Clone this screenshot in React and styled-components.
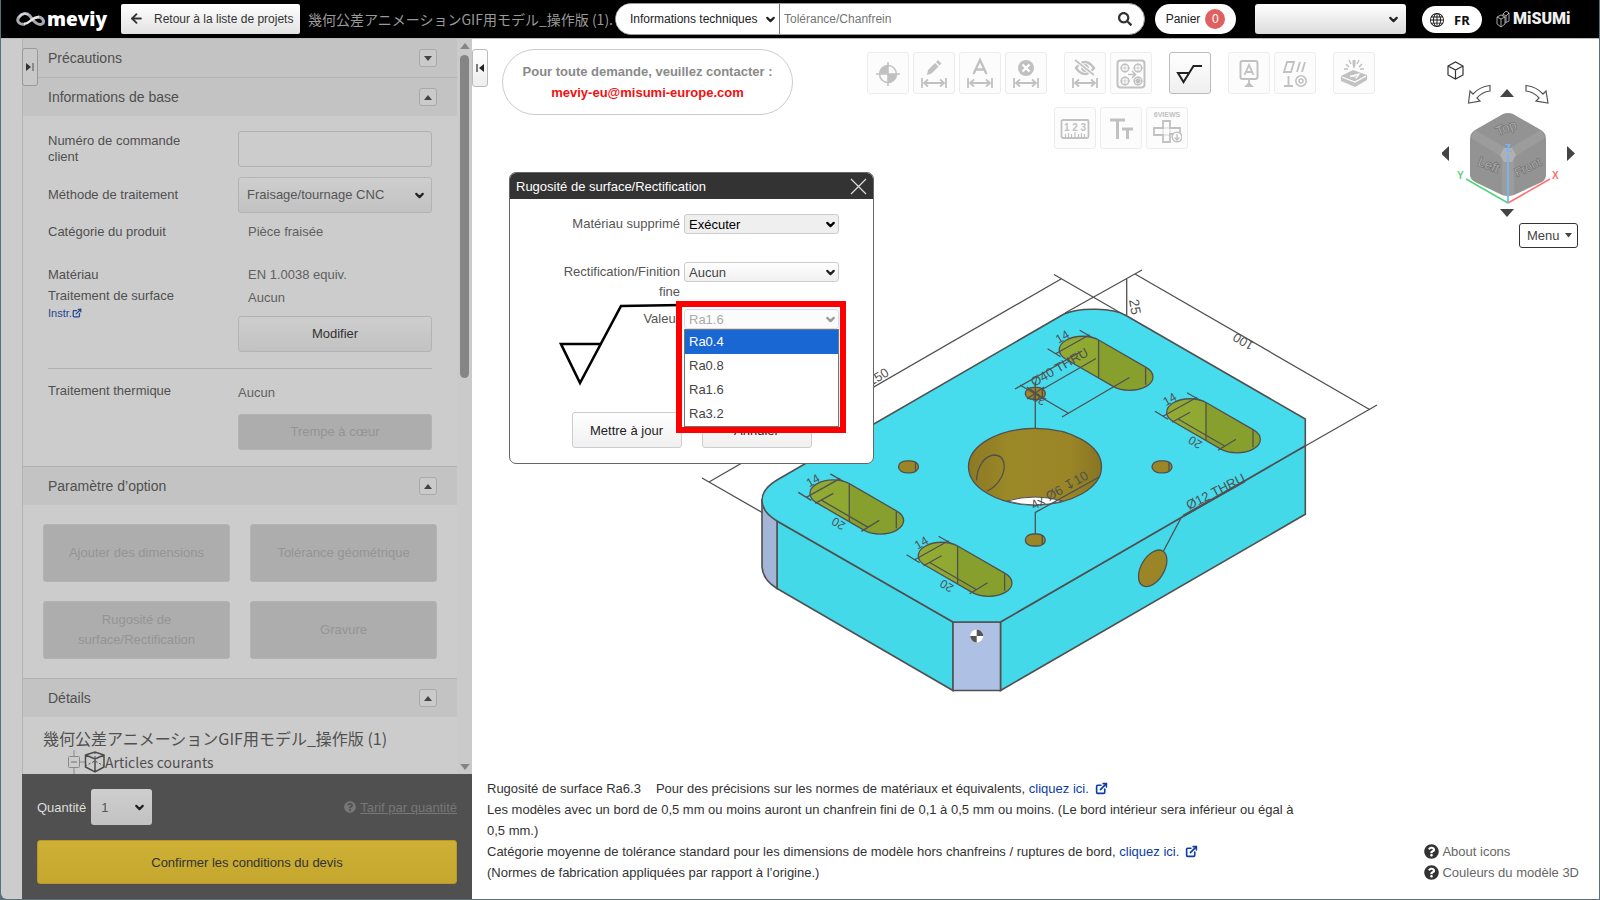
import React, { useState } from 'react'
import styled, { createGlobalStyle } from 'styled-components'
import { ArrowLeft, ChevronDown } from 'lucide-react'
import { FaSearch, FaQuestionCircle } from 'react-icons/fa'
import { FiExternalLink } from 'react-icons/fi'
import { BsGlobe } from 'react-icons/bs'


const GlobalStyle = createGlobalStyle`
    * {
        box-sizing: border-box;
    }
    body {
        margin: 0;
        background: #57717d;
        font-family: 'Liberation Sans', 'Noto Sans CJK JP', Arial, sans-serif;
        font-size: 13px;
        color: #333;
    }
    button, input, select {
        font: inherit;
        margin: 0;
    }
    p, h1, h2 {
        margin: 0;
    }
    h1, h2 {
        font-weight: 400;
    }
    svg {
        display: block;
        flex-shrink: 0;
    }
`

const StyledApp = styled.div`
    height: 100vh;
    padding: 0 1px 1px;
    display: flex;
    flex-direction: column;
`

/* ---------- header ---------- */

const StyledHeader = styled.header`
    height: 39px;
    flex-shrink: 0;
    display: flex;
    align-items: center;
    padding: 0 28px 1px 15px;
    background: #000;
    border-bottom: 1px solid #bbb;
    font-size: 12px;
`

const Brand = styled.a`
    display: flex;
    align-items: center;
    gap: 2px;
    width: 105px;
    flex-shrink: 0;
    color: #fff;
    font-family: 'Open Sans', sans-serif;
    font-size: 19px;
    font-weight: 800;
    line-height: 30px;
    text-decoration: none;
`

const BackButton = styled.button`
    height: 30px;
    width: 179px;
    flex-shrink: 0;
    display: flex;
    align-items: center;
    gap: 10px;
    padding: 0 8px;
    border: 0;
    border-radius: 2px;
    background: linear-gradient(#fff, #e2e2e2);
    color: #333;
    white-space: nowrap;
`

const ProjectName = styled.h1`
    width: 315px;
    flex-shrink: 0;
    padding-left: 8px;
    overflow: hidden;
    white-space: nowrap;
    color: #999;
    font-family: 'Noto Sans CJK JP', sans-serif;
    font-size: 14px;
    line-height: 30px;
`

const SearchBar = styled.form`
    height: 32px;
    flex: 1;
    min-width: 0;
    display: flex;
    align-items: center;
    padding-right: 12px;
    border: 1px solid #999;
    border-radius: 16px;
    background: #fff;
    overflow: hidden;
    input {
        flex: 1;
        min-width: 0;
        height: 100%;
        padding: 0 4px;
        border: 0;
        border-left: 1px solid #777;
        outline: 0;
        color: #333;
    }
    input::placeholder {
        color: #757575;
    }
    button {
        padding: 0;
        border: 0;
        background: none;
        color: #333;
    }
`

const SelectBox = styled.span`
    position: relative;
    display: block;
    flex-shrink: 0;
    width: ${props => props.$width || '100%'};
    select {
        display: block;
        width: 100%;
        height: ${props => props.$height || 36}px;
        padding: 0 ${props => props.$pad || 8}px;
        appearance: none;
        border: ${props => props.$border || '1px solid #b3b3b3'};
        border-radius: 3px;
        background: ${props => props.$bg || 'linear-gradient(#cecece, #c2c2c2)'};
        color: ${props => props.$color || '#555'};
        opacity: 1;
    }
    svg {
        position: absolute;
        right: ${props => props.$arrow || 6}px;
        top: 50%;
        margin-top: -6px;
        color: ${props => props.$arrowColor || '#222'};
        pointer-events: none;
    }
`

const CartButton = styled.button`
    height: 30px;
    width: 81px;
    flex-shrink: 0;
    margin-left: 10px;
    margin-right: 19px;
    display: flex;
    align-items: center;
    justify-content: center;
    gap: 5px;
    padding: 0;
    border: 0;
    border-radius: 15px;
    background: #fff;
    color: #222;
    span {
        width: 20px;
        border-radius: 50%;
        background: #e0605f;
        color: #fff;
        line-height: 20px;
    }
`

const LangButton = styled.button`
    height: 27px;
    width: 60px;
    flex-shrink: 0;
    margin: 2px 14px 0 16px;
    display: flex;
    align-items: center;
    gap: 10px;
    padding: 0 8px;
    border: 0;
    border-radius: 14px;
    background: #fff;
    color: #111;
    font-family: 'Noto Sans', sans-serif;
    font-size: 13px;
    font-weight: 700;
`

const Misumi = styled.a`
    display: flex;
    align-items: center;
    gap: 3px;
    width: 75px;
    flex-shrink: 0;
    color: #f0f0f0;
    font-family: Roboto, sans-serif;
    font-size: 16px;
    font-weight: 900;
    line-height: 30px;
    text-decoration: none;
`

/* ---------- sidebar ---------- */

const Main = styled.div`
    flex: 1;
    min-height: 0;
    display: flex;
`

const Sidebar = styled.aside`
    position: relative;
    width: 471px;
    flex-shrink: 0;
    display: flex;
    flex-direction: column;
    padding-left: 21px;
    border-bottom-left-radius: 6px;
    background: #ccc;
    color: #505050;
`

const EdgeTab = styled.button`
    position: absolute;
    left: ${props => (props.$dim ? 21 : 0)}px;
    top: ${props => (props.$dim ? 9 : 10)}px;
    width: 16px;
    height: 38px;
    display: flex;
    align-items: center;
    justify-content: center;
    padding: 0;
    border: 1px solid ${props => (props.$dim ? '#999' : '#bbb')};
    border-radius: 3px;
    background: ${props => (props.$dim ? '#c8c8c8' : 'linear-gradient(#fff, #eee)')};
`

const ScrollRow = styled.div`
    flex: 1;
    min-height: 0;
    display: flex;
`

const Panels = styled.div`
    flex: 1;
    overflow: hidden;
    border-left: 1px solid #b3b3b3;
`

const ScrollBar = styled.div`
    width: 15px;
    display: flex;
    flex-direction: column;
    align-items: center;
    padding: 4px 0;
    background: #cacaca;
    div {
        width: 9px;
        height: 323px;
        margin: 6px 0 auto;
        border-radius: 5px;
        background: #858585;
    }
`

const SectionHead = styled.h2`
    display: flex;
    align-items: center;
    justify-content: space-between;
    height: ${props => (props.$first ? 38 : 39)}px;
    padding: 0 20px 0 25px;
    border-top: ${props => (props.$first ? '0' : '1px solid #b1b1b1')};
    background: #c3c3c3;
    font-size: 14px;
    button {
        width: 18px;
        height: 18px;
        display: flex;
        align-items: center;
        justify-content: center;
        padding: 0;
        border: 1px solid #a9a9a9;
        border-radius: 3px;
        background: #cacaca;
    }
`

const InfoBody = styled.div`
    padding: 15px 25px 16px;
    hr {
        height: 1px;
        margin: 16px 0 13px;
        border: 0;
        background: #b0b0b0;
    }
`

const Field = styled.div`
    display: grid;
    grid-template-columns: 190px 1fr;
    align-items: ${props => (props.$top ? 'start' : 'center')};
    margin-bottom: ${props => props.$gap || 0}px;
    line-height: 18px;
    label {
        max-width: 150px;
        line-height: 16px;
    }
    input {
        width: 100%;
        height: 36px;
        padding: 0 8px;
        border: 1px solid #b0b0b0;
        border-radius: 3px;
        background: #ccc;
    }
`

const Value = styled.div`
    padding-left: ${props => (props.$flush ? 0 : 10)}px;
    line-height: ${props => (props.$tall ? 22 : 18)}px;
    margin-bottom: ${props => props.$gap || 0}px;
    color: #606060;
`

const InstrLink = styled.a`
    display: flex;
    align-items: center;
    color: #25478f;
    font-size: 11px;
    line-height: 16px;
    text-decoration: none;
`

const PanelButton = styled.button`
    width: 100%;
    height: 36px;
    border: 1px solid #b3b3b3;
    border-radius: 3px;
    background: linear-gradient(#cecece, #c2c2c2);
    color: #333;
    &:disabled {
        background: #adadad;
        color: #949494;
    }
`

const OptionGrid = styled.div`
    display: grid;
    grid-template-columns: 1fr 1fr;
    gap: 19px 20px;
    padding: 19px 20px;
    button {
        height: 58px;
        padding: 0 20px;
        line-height: 20px;
    }
`

const Tree = styled.div`
    padding: 9px 0 0 20px;
    font-family: 'Noto Sans CJK JP', sans-serif;
    p {
        font-size: 16px;
        line-height: 24px;
    }
    div {
        display: flex;
        align-items: center;
        padding-left: 24px;
        font-size: 14px;
        line-height: 24px;
    }
`

const OrderBar = styled.footer`
    flex-shrink: 0;
    padding: 15px 15px;
    background: #505050;
`

const OrderRow = styled.div`
    display: flex;
    align-items: center;
    gap: 5px;
    margin-bottom: 15px;
    label {
        color: #ddd;
    }
    a {
        display: flex;
        align-items: center;
        gap: 4px;
        margin-left: auto;
        color: #777;
    }
`

const ConfirmButton = styled.button`
    width: 100%;
    height: 44px;
    border: 1px solid #b8982a;
    border-radius: 3px;
    background: linear-gradient(#cdb034, #c5a72f);
    color: #333;
`

/* ---------- viewer ---------- */

const Viewer = styled.main`
    position: relative;
    flex: 1;
    min-width: 0;
    display: flex;
    flex-direction: column;
    background: #fff;
`

const TopRow = styled.div`
    display: flex;
    align-items: flex-start;
    padding-left: 30px;
`

const Contact = styled.div`
    width: 291px;
    flex-shrink: 0;
    margin-top: 10px;
    padding: 11px 0;
    border: 1px solid #ccc;
    border-radius: 33px;
    color: #8a8a8a;
    font-weight: 700;
    line-height: 21px;
    text-align: center;
    a {
        color: #f01010;
        text-decoration: none;
    }
`

const Toolbar = styled.div`
    flex: 1;
    display: flex;
    flex-direction: column;
    align-items: center;
    gap: 13px;
    padding: 13px 0 0 8px;
`

const ToolRow = styled.div`
    display: flex;
    gap: 17px;
`

const ToolGroup = styled.div`
    display: flex;
    gap: 4px;
`

const ToolButton = styled.button`
    width: 42px;
    height: 42px;
    display: flex;
    align-items: center;
    justify-content: center;
    padding: 0;
    border: 1px solid ${props => (props.$active ? '#bbb' : '#ececec')};
    border-radius: 3px;
    background: ${props => (props.$active ? 'linear-gradient(#fff, #efefef)' : '#fcfcfc')};
    color: ${props => (props.$active ? '#222' : '#c1c1c1')};
`

const ViewNav = styled.div`
    width: 158px;
    flex-shrink: 0;
    display: flex;
    flex-direction: column;
    align-items: flex-end;
    gap: 4px;
    padding: 20px 21px 0 0;
`

const MenuButton = styled.button`
    width: 59px;
    height: 25px;
    display: flex;
    align-items: center;
    justify-content: space-between;
    padding: 0 5px 0 7px;
    border: 1px solid #333;
    border-radius: 3px;
    background: #fff;
    color: #444;
`

const Stage = styled.div`
    flex: 1;
    min-height: 0;
    display: flex;
    justify-content: center;
    align-items: flex-start;
`

const BottomRow = styled.div`
    display: flex;
    align-items: flex-end;
    justify-content: space-between;
    padding: 0 20px 16px 15px;
    line-height: 21px;
`

const Notes = styled.div`
    max-width: 820px;
    a {
        color: #0b3ca8;
        text-decoration: none;
    }
    svg {
        display: inline-block;
        margin-left: 6px;
        vertical-align: -2px;
        color: #0b3ca8;
    }
    span {
        margin-right: 15px;
    }
`

const Legend = styled.div`
    a {
        display: flex;
        align-items: center;
        gap: 3px;
        color: #666;
        text-decoration: none;
    }
    svg {
        color: #333;
    }
`

/* ---------- dialog ---------- */

const Dialog = styled.section`
    position: absolute;
    left: 37px;
    top: 133px;
    width: 365px;
    border: 1px solid #666;
    border-radius: 7px;
    background: #fff;
    color: #555;
    header {
        height: 26px;
        display: flex;
        align-items: center;
        justify-content: space-between;
        padding: 0 6px;
        border-radius: 6px 6px 0 0;
        background: #333;
        color: #fff;
    }
    header button {
        padding: 0;
        border: 0;
        background: none;
    }
`

const DialogBody = styled.form`
    position: relative;
    padding: 15px 34px 15px 49px;
`

const DialogRow = styled.div`
    display: grid;
    grid-template-columns: 1fr 155px;
    column-gap: 4px;
    align-items: start;
    margin-bottom: ${props => props.$gap}px;
    line-height: 20px;
    text-align: right;
`

const Symbol = styled.svg`
    position: absolute;
    left: 48px;
    top: 100px;
`

const OpenSelect = styled(SelectBox)`
    z-index: 1;
    select {
        position: relative;
    }
`

const OptionList = styled.ul`
    position: absolute;
    top: 20px;
    left: 0;
    width: 100%;
    margin: 0;
    padding: 0;
    list-style: none;
    border: 1px solid #767676;
    background: #fff;
    color: #444;
    text-align: left;
    li {
        padding: 0 4px;
        line-height: 24px;
    }
    li[aria-selected='true'] {
        background: #1967d2;
        color: #fff;
    }
`

const Highlight = styled.div`
    position: absolute;
    left: -8px;
    top: -8px;
    width: 170px;
    height: 132px;
    border: 6px solid #f00;
    background: #fff;
`

const Actions = styled.div`
    display: flex;
    justify-content: center;
    gap: 20px;
    margin: 83px 0 0 -15px;
    button {
        width: 110px;
        height: 36px;
        flex-shrink: 0;
        border: 1px solid #ccc;
        border-radius: 3px;
        background: linear-gradient(#fff, #f0f0f0);
        color: #222;
    }
`

const Triangle = ({ up, size = 8, color = '#444' }) => (
    <svg width={size} height={size / 2 + 1} viewBox="0 0 8 5">
        <path d={up ? 'M0 5L4 0L8 5Z' : 'M0 0L4 5L8 0Z'} fill={color} />
    </svg>
)

const Chevron = () => <ChevronDown size={13} strokeWidth={4} />

function Header(){
    return(
        <StyledHeader>
            <Brand href="#">
                <svg width="29" height="16" viewBox="0 0 29 16" fill="none">
                    <path d="M9 13C3 14 0 10 3 6C6 2 11 1 14 5C17 10 22 15 26 13C29 11 27 6 22 6" stroke="#a8a8ae" strokeWidth="3" />
                    <path d="M8 13C14 13 15 6 23 6" stroke="#e9e9e9" strokeWidth="2.4" />
                    <path d="M3 6C6 2 10 2 12 4" stroke="#dedee4" strokeWidth="1.4" />
                </svg>
                meviy
            </Brand>
            <BackButton>
                <ArrowLeft size={15} strokeWidth={3} />
                Retour à la liste de projets
            </BackButton>
            <ProjectName>幾何公差アニメーションGIF用モデル_操作版 (1).</ProjectName>
            <SearchBar onSubmit={e => e.preventDefault()}>
                <SelectBox $width="163px" $height={30} $pad={14} $arrow={2} $border="0" $bg="#fff" $color="#222">
                    <select aria-label="Type de recherche">
                        <option>Informations techniques</option>
                    </select>
                    <Chevron />
                </SelectBox>
                <input type="text" placeholder="Tolérance/Chanfrein" aria-label="Recherche" />
                <button type="submit" aria-label="Rechercher"><FaSearch size={14} /></button>
            </SearchBar>
            <CartButton>Panier <span>0</span></CartButton>
            <SelectBox $width="151px" $height={30} $border="0" $bg="linear-gradient(#fff, #dcdcdc)">
                <select aria-label="Compte"><option></option></select>
                <Chevron />
            </SelectBox>
            <LangButton><BsGlobe size={14} />FR</LangButton>
            <Misumi href="#">
                <svg width="14" height="18" viewBox="0 0 14 18" fill="none" stroke="#ccc" strokeWidth=".8">
                    <path d="M1 7L5 9L5 17L1 14ZM5 9L9 7L9 14L5 17M1 7L5 5L9 7M7 4L10 1L13 3L13 11L9 13M7 4L10 6L13 3M10 6V12M7 4V6" />
                </svg>
                MiSUMi
            </Misumi>
        </StyledHeader>
    )
}

function Section({ title, first, closed, children }){
    return(
        <>
            <SectionHead $first={first}>
                {title}
                <button aria-label={title}><Triangle up={!closed} /></button>
            </SectionHead>
            {children}
        </>
    )
}

function SidePanel(){
    return(
        <Sidebar>
            <ScrollRow>
                <Panels>
                    <Section title="Précautions" first closed />
                    <Section title="Informations de base">
                        <InfoBody>
                            <Field $gap={10}>
                                <label htmlFor="order">Numéro de commande client</label>
                                <input id="order" type="text" />
                            </Field>
                            <Field $gap={10}>
                                <label htmlFor="method">Méthode de traitement</label>
                                <SelectBox>
                                    <select id="method"><option>Fraisage/tournage CNC</option></select>
                                    <Chevron />
                                </SelectBox>
                            </Field>
                            <Field $gap={25}>
                                <span>Catégorie du produit</span>
                                <Value>Pièce fraisée</Value>
                            </Field>
                            <Field $gap={3}>
                                <span>Matériau</span>
                                <Value>EN 1.0038 equiv.</Value>
                            </Field>
                            <Field $top>
                                <div>
                                    Traitement de surface
                                    <InstrLink href="#">Instr.<FiExternalLink size={10} strokeWidth={3} /></InstrLink>
                                </div>
                                <div>
                                    <Value $tall $gap={7}>Aucun</Value>
                                    <PanelButton>Modifier</PanelButton>
                                </div>
                            </Field>
                            <hr />
                            <Field $top>
                                <span>Traitement thermique</span>
                                <div>
                                    <Value $tall $flush $gap={10}>Aucun</Value>
                                    <PanelButton disabled>Trempe à cœur</PanelButton>
                                </div>
                            </Field>
                        </InfoBody>
                    </Section>
                    <Section title="Paramètre d’option">
                        <OptionGrid>
                            <PanelButton disabled>Ajouter des dimensions</PanelButton>
                            <PanelButton disabled>Tolérance géométrique</PanelButton>
                            <PanelButton disabled>Rugosité de surface/Rectification</PanelButton>
                            <PanelButton disabled>Gravure</PanelButton>
                        </OptionGrid>
                    </Section>
                    <Section title="Détails">
                        <Tree>
                            <p>幾何公差アニメーションGIF用モデル_操作版 (1)</p>
                            <div>
                                <svg width="38" height="24" viewBox="0 0 38 24" fill="none" stroke="#888" strokeWidth="1">
                                    <path d="M7 0V6M7 18V24M13 12H18" />
                                    <rect x="1.5" y="6.5" width="11" height="11" rx="1" />
                                    <path d="M4 12H10" strokeWidth="1.4" />
                                    <path d="M18.500 5L28 2L37 5V17L28 22L18.500 17ZM18.500 5L28 9L37 5M28 9V22" stroke="#4a4a4a" strokeWidth="1.5" />
                                    <path d="M28 2V9M18 16L28 11L37 16" stroke="#4a4a4a" strokeDasharray="2 2" />
                                </svg>
                                Articles courants
                            </div>
                        </Tree>
                    </Section>
                </Panels>
                <ScrollBar>
                    <Triangle up size={10} color="#858585" />
                    <div />
                    <Triangle size={10} color="#858585" />
                </ScrollBar>
            </ScrollRow>
            <OrderBar>
                <OrderRow>
                    <label htmlFor="qty">Quantité</label>
                    <SelectBox $width="61px" $pad={10} $border="0">
                        <select id="qty"><option>1</option></select>
                        <Chevron />
                    </SelectBox>
                    <a href="#"><FaQuestionCircle size={12} />Tarif par quantité</a>
                </OrderRow>
                <ConfirmButton>Confirmer les conditions du devis</ConfirmButton>
            </OrderBar>
            <EdgeTab $dim aria-label="Replier le panneau">
                <svg width="8" height="10" viewBox="0 0 8 10">
                    <path d="M0 1L5 5L0 9Z" fill="#333" />
                    <path d="M7 1V9" stroke="#777" strokeWidth="1.5" />
                </svg>
            </EdgeTab>
        </Sidebar>
    )
}

const DimArrow = () => (
    <path d="M1 17V27M25 17V27M3 22H23M7 18.5L3 22L7 25.5M19 18.5L23 22L19 25.5" strokeWidth="1.8" />
)

const toolIcons = {
    origin: (
        <>
            <path d="M13 1V25M1 13H25" strokeWidth="1.6" />
            <circle cx="13" cy="13" r="8.5" strokeWidth="1.5" />
            <path d="M13 13V4.5A8.5 8.5 0 0 0 4.5 13ZM13 13V21.5A8.5 8.5 0 0 0 21.5 13Z" fill="currentColor" stroke="none" />
        </>
    ),
    edit: (
        <>
            <DimArrow />
            <path d="M6 14L7 9L14 2L17.5 5.5L10.5 12.5Z M15 1L17 -1L20.5 2.5L18.5 4.5Z" fill="currentColor" stroke="none" />
        </>
    ),
    text: (
        <>
            <DimArrow />
            <path d="M6.5 13L13 -1L19.5 13M9 8.5H17" strokeWidth="2.4" />
        </>
    ),
    remove: (
        <>
            <DimArrow />
            <circle cx="13" cy="7" r="8" fill="currentColor" stroke="none" />
            <path d="M9.5 3.5L16.5 10.5M16.5 3.5L9.5 10.5" stroke="#fff" strokeWidth="2.2" />
        </>
    ),
    hide: (
        <>
            <DimArrow />
            <path d="M4 7Q13 -5 22 7Q13 19 4 7Z" strokeWidth="2.4" />
            <circle cx="13" cy="7" r="3.5" fill="currentColor" />
            <path d="M3 -1L22 14" stroke="#fcfcfc" strokeWidth="4" />
            <path d="M3 -1L22 14" strokeWidth="1.6" />
        </>
    ),
    copy: (
        <>
            <rect x="-.5" y="-.5" width="27" height="27" rx="3" strokeWidth="2" />
            {[[7, 7], [20, 7], [7, 20], [20, 20]].map(([x, y]) => (
                <g key={x + '-' + y}>
                    <circle cx={x} cy={y} r="3.8" strokeWidth="1.5" />
                    <path d={`M${x - 5} ${y}H${x + 5}M${x} ${y - 5}V${y + 5}`} strokeWidth=".7" />
                </g>
            ))}
            <circle cx="20" cy="20" r="2" fill="currentColor" />
            <path d="M10 13.5H17M14 10L17.5 13.5L14 17" strokeWidth="1.6" />
        </>
    ),
    rough: (
        <path d="M12.5 12H1L6.500 21L16.500 5H25" strokeWidth="2" />
    ),
    datum: (
        <>
            <rect x="4.5" y="0" width="17" height="18" rx="2" strokeWidth="2" />
            <path d="M8.5 14L13 4L17.5 14M10 11H16M13 19V23" strokeWidth="1.8" />
            <path d="M8 26L13 21L18 26Z" fill="currentColor" stroke="none" />
        </>
    ),
    gdt: (
        <>
            <path d="M2 11L5 1H12L9 11ZM15 11L18 1M20 11L23 1M2 25H11M6.5 15V25" strokeWidth="1.8" />
            <circle cx="19" cy="20" r="5.2" strokeWidth="1.6" />
            <circle cx="19" cy="20" r="2" strokeWidth="1.5" />
        </>
    ),
    engrave: (
        <>
            <path d="M0 15L12 9L26 14V19L14 26L0 20Z" fill="currentColor" stroke="none" />
            <path d="M1 16L14 21L25 15M9 15.5L18 13L15 17.5M11 15L16 16.5" stroke="#fff" strokeWidth="1.3" />
            <path d="M5 3L8 6M3 8H7M21 3L18 6M23 8H19M8 -1L10 3M18 -1L16 3" strokeWidth="1.5" />
            <path d="M11.5 -1H14.5V4L13 8L11.5 4Z" fill="currentColor" stroke="none" />
        </>
    ),
    ruler: (
        <>
            <rect x="-.5" y="4" width="27" height="18" rx="1.5" strokeWidth="1.8" />
            <path d="M3.5 21V18M6.5 21V17M9.5 21V18M13 21V16M16.5 21V18M19.5 21V17M22.5 21V18" strokeWidth="1.2" />
            <text x="13" y="15" textAnchor="middle" fontSize="10" fontWeight="700" fill="currentColor" stroke="none">1 2 3</text>
        </>
    ),
    size: (
        <path d="M2 4H17M9.5 4V23M14 13H25M19.5 13V23" strokeWidth="3" />
    ),
    views: (
        <>
            <text x="13" y="1" textAnchor="middle" fontSize="7" fontWeight="700" fill="currentColor" stroke="none">6VIEWS</text>
            <path d="M9 5H16V12H26V18H16V26H9V19H0V12H9Z" strokeWidth="1.8" />
            <path d="M9 12H16V19H9Z" strokeWidth=".7" />
            <circle cx="23" cy="21" r="4.800" fill="#fff" strokeWidth="1.6" />
            <path d="M23 18V24M20.5 21.5L23 24L25.5 21.5" strokeWidth="1.4" />
        </>
    ),
}

const toolRows = [
    [['origin', 'edit', 'text', 'remove'], ['hide', 'copy'], ['rough'], ['datum', 'gdt'], ['engrave']],
    [['ruler', 'size', 'views']],
]

function Tools(){
    return(
        <Toolbar>
            {toolRows.map((row, i) => (
                <ToolRow key={i}>
                    {row.map(group => (
                        <ToolGroup key={group[0]}>
                            {group.map(name => (
                                <ToolButton key={name} aria-label={name} $active={name === 'rough'}>
                                    <svg width="30" height="34" viewBox="-2 -5 30 34" fill="none" stroke="currentColor">
                                        {toolIcons[name]}
                                    </svg>
                                </ToolButton>
                            ))}
                        </ToolGroup>
                    ))}
                </ToolRow>
            ))}
        </Toolbar>
    )
}

function ViewCube(){
    return(
        <svg width="136" height="160" viewBox="1442 60 136 160" fill="none">
            <path d="M1448 67L1455.5 63L1463 67V76L1455.5 80L1448 76ZM1448 67L1455.5 71L1463 67M1455.5 71V80" stroke="#333" strokeWidth="1.2" />
            <path d="M1468.500 104L1470 92L1473 95Q1479 88 1490 86.500V92Q1482 93 1477 99L1480 102Z" stroke="#555" strokeWidth="1.2" />
            <path d="M1548 104L1546 92L1543 95Q1537 88 1526 86.500V92Q1534 93 1539 99L1536 102Z" stroke="#555" strokeWidth="1.2" />
            <path d="M1500 98L1507 90L1514 98ZM1500 210H1514L1507 218ZM1449 147V162L1441 154.5ZM1567 147V162L1575 154.5Z" fill="#444" />
            <path d="M1503 115Q1508 113 1513 115L1541 131Q1546 134 1546 140V176Q1546 180 1542 183L1514 196Q1508 198 1502 196L1475 183Q1470 180 1470 176V140Q1470 134 1475 131Z" fill="#939393" />
            <path d="M1471 139L1475 131L1508 150L1541 131L1545 139L1514 158V196H1502V158Z" fill="#9c9c9c" />
            <path d="M1504 149H1512L1516 156L1512 163H1504L1500 156Z" fill="#b0b0b0" />
            <g fontSize="13" fill="#a9a9a9" stroke="#6f6f6f" strokeWidth="1.200" paintOrder="stroke" fontFamily="Liberation Sans">
                <text transform="translate(1498 137) rotate(-22)">Top</text>
                <text transform="translate(1477 166) rotate(22)">Left</text>
                <text transform="translate(1517 178) rotate(-26)" fontSize="12">Front</text>
            </g>
            <path d="M1466 180L1508 204" stroke="#4fd67a" strokeWidth="1.6" />
            <path d="M1550 180L1508 204" stroke="#ff7070" strokeWidth="1.6" />
            <path d="M1508 155V204" stroke="#78b7f5" strokeWidth="1.8" />
            <g fontSize="10" fontWeight="700" fontFamily="Liberation Sans">
                <text x="1457" y="180" fill="#4fd67a">Y</text>
                <text x="1552" y="180" fill="#ff7070">X</text>
                <text x="1505" y="153" fill="#78b7f5">Z</text>
            </g>
        </svg>
    )
}

const slots = [[1082.6, 350.7, true], [1190, 413.2], [833.3, 494.4], [941.6, 556.7]]
const pinHoles = [[1035.3, 394.4], [908.5, 467.8], [1162, 467.8], [1035.3, 541]]

function Model(){
    return(
        <svg width="690" height="452" viewBox="691 249 690 452" fill="none" stroke="#505050" strokeWidth="1.3">
            <defs>
                <linearGradient id="slot">
                    <stop offset="0" stopColor="#93ab35" />
                    <stop offset=".42" stopColor="#8fa831" />
                    <stop offset=".43" stopColor="#879f2d" />
                    <stop offset="1" stopColor="#87a02d" />
                </linearGradient>
                <linearGradient id="bore">
                    <stop offset="0" stopColor="#8c7924" />
                    <stop offset=".3" stopColor="#9b8827" />
                    <stop offset=".75" stopColor="#9b8627" />
                    <stop offset="1" stopColor="#887522" />
                </linearGradient>
            </defs>
            {/* overall dimensions */}
            <path d="M1061 280L709 483M1054 275.5L1126 317M702 479L777 522M1065 314L1142 271M1135 275L1370 410.7M1126.7 280V316" />
            {/* body */}
            <g strokeWidth="1.6">
                <path d="M777 522L953 623V691.5L777 589.5Z" fill="#44d9e9" />
                <path d="M762 502V568Q763 581 777 589.5V522Z" fill="#a4b6d8" />
                <path d="M1000.5 623L1305.3 446.7V515.3L1000.5 691.5Z" fill="#44d9e9" />
                <path d="M953 623H1000.5V691.5H953Z" fill="#aec1e4" />
                <path d="M777 522L953 623H1000.5L1305.3 446.7V420L1126 316.5C1113 309 1080 308 1064 315L777 481C757 493 757 510 777 522Z" fill="#46dcee" />
            </g>
            <path d="M1300 450L1377 406" />
            {/* bore */}
            <ellipse cx="1035" cy="467.7" rx="66.5" ry="38.3" fill="url(#bore)" />
            <path d="M1007 502Q1035 494 1063 502Q1035 510 1007 502Z" fill="#fff" strokeWidth="1" />
            <path d="M976.5 481.5C977 467 985 456 995 456C1005 457 1006 468 1002 477C998 485 994 489 987 492" />
            {pinHoles.map(([x, y]) => (
                <g key={x + '-' + y}>
                    <rect x={x - 10} y={y - 6} width="20" height="12" rx="8" ry="6" fill="#9b8627" />
                    <path d={`M${x + 7} ${y - 5}V${y + 4}`} />
                </g>
            ))}
            <ellipse cx="1152.7" cy="569.3" rx="20" ry="11.6" transform="rotate(-60 1152.7 569.3)" fill="#9b8627" />
            {slots.map(([x, y, crossed]) => (
                <g key={x} transform={`translate(${x} ${y})`}>
                    <path d="M16.5 -9.5L63.5 17.7A23.3 13.4 0 0 1 30.5 36.7L-16.5 9.5A23.3 13.4 0 0 1 16.5 -9.5Z" fill="url(#slot)" />
                    <path d="M16 -9.5V28M63 18V35" />
                    <path d="M-3 -19.5L10 -12M-35 -1L-22 7M-27 4L7 -15" />
                    <text transform="translate(-24 -6) rotate(-30)" fontSize="12" fill="#505050" stroke="none">14</text>
                    {!crossed && (
                        <>
                            <path d="M-18 10L0 0M-11.5 7L35 34M28 38L46 27" />
                            <text transform="translate(13 30) rotate(210)" fontSize="12" fill="#505050" stroke="none">20</text>
                        </>
                    )}
                </g>
            ))}
            {/* feature callouts */}
            <path d="M1015 390L1082 352M1020 386L1068 414M1043 390L1096 359.5M1062 418L1129.5 378.5M1035.3 383V430M1027 388L1044 400M1044 388L1027 400" />
            <path d="M1035.3 535V513.5L1100 477.5M1181.5 518L1163.5 552" />
            <path d="M1183 517L1245 482" strokeWidth="2.4" />
            <g fontSize="13" fill="#505050" stroke="none">
                <text transform="translate(1034 388) rotate(-30)">Ø40 THRU</text>
                <text transform="translate(1047 400) rotate(210)" fontSize="12">20</text>
                <text transform="translate(1034 511) rotate(-30)">4x Ø6 ↧10</text>
                <text transform="translate(1189 511) rotate(-27)" fontSize="13">Ø12 THRU</text>
                <text transform="translate(1255 344) rotate(210)" fontSize="13">100</text>
                <text transform="translate(871 387) rotate(-30)" fontSize="13">150</text>
                <text transform="translate(1129 301) rotate(80)" fontSize="14">25</text>
            </g>
            <circle cx="976.7" cy="637" r="6.5" fill="#fff" stroke="none" />
            <path d="M976.7 637V630.5A6.5 6.5 0 0 1 983.2 637ZM976.7 637V643.5A6.5 6.5 0 0 1 970.2 637Z" fill="#555" stroke="none" />
        </svg>
    )
}

const whiteSelect = { $height: 20, $pad: 4, $arrow: 2, $border: '1px solid #ccc' }

function RoughnessDialog(){
    const [value, setValue] = useState('Ra0.4')
    return(
        <Dialog role="dialog" aria-labelledby="dialog-title">
            <header>
                <span id="dialog-title">Rugosité de surface/Rectification</span>
                <button aria-label="Fermer">
                    <svg width="17" height="17" viewBox="0 0 17 17" stroke="#ddd" strokeWidth="1.2">
                        <path d="M1 1L16 16M16 1L1 16" />
                    </svg>
                </button>
            </header>
            <DialogBody onSubmit={e => e.preventDefault()}>
                <DialogRow $gap={28}>
                    <label htmlFor="removed">Matériau supprimé</label>
                    <SelectBox {...whiteSelect} $bg="#efefef" $color="#000" $arrowColor="#000">
                        <select id="removed"><option>Exécuter</option></select>
                        <Chevron />
                    </SelectBox>
                </DialogRow>
                <DialogRow $gap={7}>
                    <label htmlFor="finish">Rectification/Finition fine</label>
                    <SelectBox {...whiteSelect} $bg="linear-gradient(#fff, #f0f0f0)" $color="#444">
                        <select id="finish"><option>Aucun</option></select>
                        <Chevron />
                    </SelectBox>
                </DialogRow>
                <Symbol width="124" height="90" viewBox="0 0 124 90" fill="none" stroke="#000" strokeWidth="2.6">
                    <path d="M42 45H3L22 84L63 7L124 6" />
                </Symbol>
                <DialogRow $gap={0}>
                    <label htmlFor="roughness">Valeur</label>
                    <OpenSelect {...whiteSelect} $border="1px solid #d5d9f5" $bg="#fbfbfb" $color="#aaa" $arrowColor="#999">
                        <Highlight />
                        <select id="roughness"><option>Ra1.6</option></select>
                        <Chevron />
                        <OptionList role="listbox" aria-label="Valeur">
                            {['Ra0.4', 'Ra0.8', 'Ra1.6', 'Ra3.2'].map(ra => (
                                <li key={ra} role="option" aria-selected={ra === value} onClick={() => setValue(ra)}>{ra}</li>
                            ))}
                        </OptionList>
                    </OpenSelect>
                </DialogRow>
                <Actions>
                    <button type="submit">Mettre à jour</button>
                    <button type="button">Annuler</button>
                </Actions>
            </DialogBody>
        </Dialog>
    )
}

function App(){
    return(
        <>
        <GlobalStyle />
        <StyledApp>
            <Header />
            <Main>
                <SidePanel />
                <Viewer>
                    <TopRow>
                        <Contact>
                            <p>Pour toute demande, veuillez contacter :</p>
                            <a href="mailto:meviy-eu@misumi-europe.com">meviy-eu@misumi-europe.com</a>
                        </Contact>
                        <Tools />
                        <ViewNav>
                            <ViewCube />
                            <MenuButton>Menu <Triangle size={7} /></MenuButton>
                        </ViewNav>
                    </TopRow>
                    <Stage>
                        <Model />
                    </Stage>
                    <BottomRow>
                        <Notes>
                            <p>
                                <span>Rugosité de surface Ra6.3</span>
                                Pour des précisions sur les normes de matériaux et équivalents, <a href="#">cliquez ici.<FiExternalLink size={13} strokeWidth={3} /></a>
                            </p>
                            <p>Les modèles avec un bord de 0,5 mm ou moins auront un chanfrein fini de 0,1 à 0,5 mm ou moins. (Le bord intérieur sera inférieur ou égal à 0,5 mm.)</p>
                            <p>
                                Catégorie moyenne de tolérance standard pour les dimensions de modèle hors chanfreins / ruptures de bord, <a href="#">cliquez ici.<FiExternalLink size={13} strokeWidth={3} /></a>
                            </p>
                            <p>(Normes de fabrication appliquées par rapport à l’origine.)</p>
                        </Notes>
                        <Legend>
                            <a href="#"><FaQuestionCircle size={15} />About icons</a>
                            <a href="#"><FaQuestionCircle size={15} />Couleurs du modèle 3D</a>
                        </Legend>
                    </BottomRow>
                    <RoughnessDialog />
                    <EdgeTab aria-label="Déplier le panneau">
                        <svg width="8" height="10" viewBox="0 0 8 10">
                            <path d="M8 1L3 5L8 9Z" fill="#222" />
                            <path d="M1 1V9" stroke="#555" strokeWidth="1.5" />
                        </svg>
                    </EdgeTab>
                </Viewer>
            </Main>
        </StyledApp>
        </>
    )
}

export default App
